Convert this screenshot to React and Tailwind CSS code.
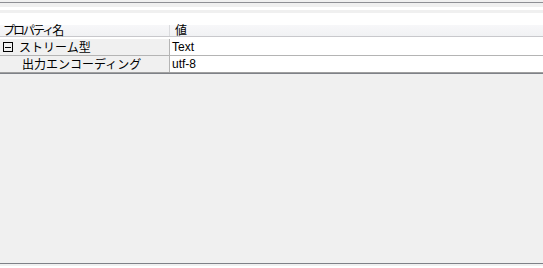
export default function App() {
  const rows = [
    { name: "ストリーム型", value: "Text", group: true },
    { name: "出力エンコーディング", value: "utf-8", group: false },
  ];

  return (
    <div
      className="flex h-[268px] w-[543px] flex-col overflow-hidden bg-[#f0f0f0] text-[12px] text-black"
      style={{ fontFamily: '"Noto Sans CJK JP", "Liberation Sans", sans-serif' }}
    >
      {/* toolbar strip */}
      <div className="h-[2px] bg-[#f0f0f0]" />
      <div className="h-px bg-[#8e8f94]" />
      <div className="h-[4px] bg-[#f0f0f0]" />
      <div className="h-[3px] bg-white" />
      <div className="h-[3px] bg-[#f0f0f0]" />
      <div className="h-[12px] bg-white" />

      {/* grid header */}
      <div className="flex h-[12px] border-b border-[#c8c8cc] bg-gradient-to-b from-[#f7f7f9] to-[#f1f2f4] leading-[12px]">
        <div className="w-[170px] border-r border-[#dadbde] pl-[3px]">
          <span className="relative -top-px tracking-[-2px]">プロパティ名</span>
        </div>
        <div className="flex-1 pl-[5px]">
          <span className="relative -top-px">値</span>
        </div>
      </div>
      <div className="h-[2px] bg-white" />

      {/* rows */}
      <div className="flex flex-col bg-white">
        {rows.map((row, i) => (
          <div
            key={row.name}
            className={`flex items-center leading-none ${
              i === rows.length - 1 ? "h-[16px]" : "h-[17px] border-b border-[#b4b4b4]"
            }`}
          >
            <div className="flex h-full w-[170px] items-center border-r border-[#b4b4b4] bg-[#f0f0f0] pl-[3px]">
              {row.group ? (
                <span className="mr-[6px] flex h-[10px] w-[10px] items-center justify-center border border-black">
                  <span className="h-px w-[6px] bg-black" />
                </span>
              ) : (
                <span className="w-[19px]" />
              )}
              <span>{row.name}</span>
            </div>
            <div
              className="flex-1 pl-[2px]"
              style={{ fontFamily: '"Liberation Sans", sans-serif' }}
            >
              {row.value}
            </div>
          </div>
        ))}
      </div>
      <div className="h-px bg-[#a0a0a0]" />
      <div className="h-px bg-[#7e8187]" />

      <div className="flex-1" />
      <div className="h-px bg-[#7e8187]" />
      <div className="h-[2px] bg-[#f0f0f0]" />
      <div className="h-[2px] bg-white" />
    </div>
  );
}
